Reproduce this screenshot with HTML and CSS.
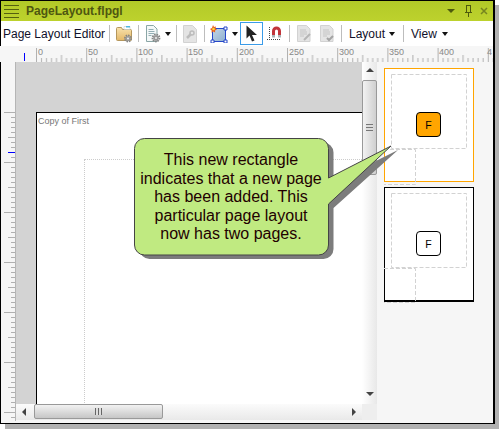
FILE: index.html
```html
<!DOCTYPE html>
<html lang="en">
<head>
  <meta charset="UTF-8">
  <title>PageLayout.flpgl</title>
  <link rel="stylesheet" href="styles.css">
</head>
<body>
  <div class="window">
    <div class="titlebar">
      <div class="hamburger"><span></span><span></span><span></span><span></span></div>
      <div class="title">PageLayout.flpgl</div>
      <svg class="title-tools" width="48" height="16" viewBox="0 0 48 16">
        <path d="M5 6h8l-4 4z" fill="#4d5a0c"/>
        <path d="M23 9.500h7M24.500 3v6M28.500 3v6M24 2.500h5M26.500 9v5" stroke="#4d5a0c" fill="none"/>
        <path d="M39 5l6 6M45 5l-6 6" stroke="#76851f" stroke-width="1.500" fill="none"/>
      </svg>
    </div>

    <div class="toolbar">
      <span class="tb-label first">Page Layout Editor</span>
      <i class="sep"></i>
      <svg class="tb-icon folder" width="18" height="18" viewBox="0 0 18 18">
        <defs>
          <linearGradient id="folder-fill" x1="0" y1="0" x2="0" y2="1"><stop offset="0" stop-color="#f8e2ae"/><stop offset="1" stop-color="#e4b868"/></linearGradient>
        </defs>
        <path d="M1.500 3.500a1 1 0 0 1 1-1h4l1 2h8a1 1 0 0 1 1 1v9a1 1 0 0 1-1 1h-13a1 1 0 0 1-1-1z" fill="url(#folder-fill)" stroke="#b5975c"/>
        <path d="M9 1.500h6v3H9z" fill="#fff" stroke="#b9c4c4" stroke-width=".5"/>
        <path d="M11 1h4v1.500h-4z" fill="#4fb6e0"/>
        <circle cx="13" cy="13.500" r="3" fill="none" stroke="#858585" stroke-width="2" stroke-dasharray="1.500 .8"/>
        <circle cx="13" cy="13.500" r="2.500" fill="#9a9a9a"/><circle cx="13" cy="13.500" r="1" fill="#eee"/>
      </svg>
      <i class="sep s2"></i>
      <svg class="tb-icon doc" width="18" height="18" viewBox="0 0 18 18">
        <path d="M2.500 .5h7l3.500 3.500v12.500h-10.500z" fill="#f4f8f8" stroke="#8aa6a6"/>
        <path d="M4.500 4.500h5M4.500 6.500h6M4.500 8.500h6M4.500 10.500h3" stroke="#93aeb4"/>
        <circle cx="12" cy="13" r="3.400" fill="none" stroke="#858585" stroke-width="2" stroke-dasharray="1.500 .8"/>
        <circle cx="12" cy="13" r="2.800" fill="#9a9a9a"/><circle cx="12" cy="13" r="1" fill="#eee"/>
      </svg>
      <i class="caret c-doc"></i>
      <i class="sep s3"></i>
      <svg class="tb-icon wrench" width="14" height="18" viewBox="0 0 14 18">
        <path d="M.5 .5h9l4 4v13H.5z" fill="#e4e4e4" stroke="#d2d2d2"/>
        <path d="M4 13l4-4" stroke="#bcbcbc" stroke-width="2.500"/>
        <circle cx="9" cy="8" r="2" fill="none" stroke="#bcbcbc" stroke-width="1.500"/>
      </svg>
      <i class="sep s4"></i>
      <svg class="tb-icon shape" width="18" height="18" viewBox="0 0 18 18">
        <defs>
          <linearGradient id="shape-fill" x1="0" y1="0" x2="1" y2="1"><stop offset="0" stop-color="#c3d6e6"/><stop offset="1" stop-color="#8fb0cf"/></linearGradient>
        </defs>
        <rect x="2.500" y="3.500" width="13" height="13" fill="url(#shape-fill)" stroke="#2546c8"/>
        <path d="M14 2h3v3h-3zM1 15h3v3H1zM14 15h3v3h-3z" fill="#fff" stroke="#2546c8"/>
        <path d="M3 0l1 2 2-.5-.5 2 1.500 1-2 1 .2 2-2-1-1.700 1.200.2-2.200L0 4l2-1z" fill="#e8601c"/><circle cx="3.500" cy="4" r="1.300" fill="#fbd23a"/>
      </svg>
      <i class="caret c-shape"></i>
      <div class="tb-toggle">
        <svg width="13" height="17" viewBox="0 0 13 17"><path d="M1.500 .5v13l3-3 2.500 6 2.500-1-2.500-5.500h5z" fill="#222"/></svg>
      </div>
      <svg class="tb-icon magnet" width="15" height="16" viewBox="0 0 15 16">
        <path d="M5 9V5a4.500 4.500 0 0 1 9 0v4h-3V5a1.500 1.500 0 0 0-3 0v4z" fill="#c2343a"/>
        <path d="M5 9h3v2.500H5zM11 9h3v2.500h-3z" fill="#a9b3b6"/>
        <path d="M2.500 1v14M0 13.500h14" stroke="#444" stroke-dasharray="1 1"/>
      </svg>
      <i class="sep s5"></i>
      <svg class="tb-icon off1" width="14" height="17" viewBox="0 0 14 17">
        <path d="M.5 .5h9l3.500 3.500v12.500H.5z" fill="#e4e4e4" stroke="#d2d2d2"/>
        <path d="M3 5h6M3 7h7M3 9h7M3 11h4" stroke="#c4c4c4"/><path d="M7 15l6-6" stroke="#b5b5b5" stroke-width="2"/>
      </svg>
      <svg class="tb-icon off2" width="14" height="17" viewBox="0 0 14 17">
        <path d="M.5 .5h9l3.500 3.500v12.500H.5z" fill="#e4e4e4" stroke="#d2d2d2"/>
        <path d="M3 5h6M3 7h7M3 9h7M3 11h4" stroke="#c4c4c4"/><path d="M7 13l2 2 4-4" stroke="#a4a4a4" stroke-width="2" fill="none"/>
      </svg>
      <i class="sep s6"></i>
      <span class="tb-label layout">Layout</span>
      <i class="caret c-layout"></i>
      <i class="sep s7"></i>
      <span class="tb-label view">View</span>
      <i class="caret c-view"></i>
    </div>

    <svg class="ruler-top" width="493" height="16" viewBox="0 0 493 16">
      <defs>
        <pattern id="ticks-x" x="36" y="0" width="50.200" height="16" patternUnits="userSpaceOnUse">
          <path d="M.5 2v14M5.500 12v4M10.500 12v4M15.500 12v4M20.500 12v4M25.500 9v7M30.500 12v4M35.500 12v4M40.500 12v4M45.500 12v4" stroke="#b0b0b0" fill="none"/>
        </pattern>
      </defs>
      <rect x="36" y="0" width="457" height="16" fill="url(#ticks-x)"/>
      <path d="M24.500 7V15" stroke="#0000ff"/>
      <g class="ruler-nums">
        <text x="38" y="9">0</text><text x="88" y="9">50</text><text x="138" y="9">100</text>
        <text x="188" y="9">150</text><text x="239" y="9">200</text><text x="289" y="9">250</text>
        <text x="339" y="9">300</text><text x="389" y="9">350</text><text x="439" y="9">400</text>
        <text x="487" y="9">4</text>
      </g>
    </svg>

    <div class="workspace">
      <svg class="ruler-left" width="14" height="359" viewBox="0 0 14 359">
        <defs>
          <pattern id="ticks-y" x="0" y="50" width="14" height="50" patternUnits="userSpaceOnUse">
            <path d="M3 .5h11M10 5.500h4M10 10.500h4M10 15.500h4M10 20.500h4M7 25.500h7M10 30.500h4M10 35.500h4M10 40.500h4M10 45.500h4" stroke="#b0b0b0" fill="none"/>
          </pattern>
        </defs>
        <rect x="0" y="50" width="14" height="309" fill="url(#ticks-y)"/>
        <path d="M7 90.500h7" stroke="#0000ff"/>
      </svg>

      <div class="center">
        <div class="center-top">
          <div class="canvas">
            <div class="page">
              <span class="page-name">Copy of First</span>
              <div class="page-margin"></div>
            </div>
          </div>
          <div class="vscroll">
            <i class="arrow up"></i>
            <div class="vthumb"><span class="vgrip"></span></div>
            <i class="arrow down"></i>
          </div>
        </div>
        <div class="center-bottom">
          <div class="hscroll">
            <i class="arrow left"></i>
            <div class="hthumb"><span class="hgrip"></span></div>
            <i class="arrow right"></i>
          </div>
          <div class="corner"></div>
        </div>
      </div>

      <div class="thumbs">
        <div class="thumb active">
          <svg class="thumb-guides" width="92" height="118" viewBox="0 0 92 118">
            <rect x="7.500" y="6.500" width="75" height="74"/>
            <path d="M0 81.500H31.500V116.500H0"/>
          </svg>
          <div class="thumb-f">F</div>
        </div>
        <div class="thumb">
          <svg class="thumb-guides" width="92" height="118" viewBox="0 0 92 118">
            <rect x="7.500" y="6.500" width="75" height="74"/>
            <path d="M0 81.500H31.500V115.500H0"/>
          </svg>
          <div class="thumb-f">F</div>
        </div>
      </div>
    </div>

    <div class="callout">
      <svg width="272" height="130" viewBox="0 0 272 130">
        <path class="callout-shadow" d="M16.500 5.500h174a10 10 0 0 1 10 10V45L265 13 200.500 71V112a10 10 0 0 1-10 10h-174a10 10 0 0 1-10-10V15.500a10 10 0 0 1 10-10z"/>
        <path class="callout-shape" d="M11.500 1.500h174a10 10 0 0 1 10 10V41L258 9 195.500 67V108a10 10 0 0 1-10 10h-174a10 10 0 0 1-10-10V11.500a10 10 0 0 1 10-10z"/>
      </svg>
      <p>This new rectangle indicates that a new page has been added. This particular page layout now has two pages.</p>
    </div>
  </div>
</body>
</html>
```

FILE: styles.css
```css
body { margin: 0; min-height: 429px; background: #fff; font-family: "Liberation Sans", Arial, sans-serif; }

.window { position: relative; width: 492px; height: 422px; background: #f6f6f6; border: 1px solid #000; border-right-width: 2px; box-shadow: 5px 5px 0 #b1b1b1; overflow: visible; }

.titlebar { display: flex; align-items: center; height: 20px; background: linear-gradient(#b2c928, #bdd22d); }
.hamburger { display: flex; flex-direction: column; gap: 3px; width: 15px; margin-left: 3px; }
.hamburger span { height: 1px; background: #55600f; }
.title { margin-left: 7px; font-size: 12px; font-weight: bold; color: #4e5610; flex: 1; }
.title-tools { margin-right: 3px; }

.toolbar { position: relative; display: flex; align-items: center; height: 25px; background: #fff; font-size: 12px; color: #10102a; }
.toolbar .tb-label { white-space: nowrap; }
.tb-label.first { margin-left: 2px; width: 106px; }
.sep { display: block; width: 1px; height: 17px; background: #bdbdbd; flex: none; }
.caret { display: block; width: 0; height: 0; margin-top: 1px; border: 3.500px solid transparent; border-top: 4px solid #111; border-bottom: 0; flex: none; }
.tb-icon { display: block; flex: none; }
.folder { margin-left: 5px; }
.s2 { margin-left: 5px; }
.doc { margin-left: 5px; }
.c-doc { margin-left: 3px; }
.s3 { margin-left: 5px; }
.wrench { margin-left: 6px; }
.s4 { margin-left: 7px; }
.shape { margin-left: 5px; }
.c-shape { margin-left: 4px; }
.tb-toggle { display: flex; align-items: center; justify-content: center; flex: none; width: 21px; height: 21px; margin-left: 2px; background: #fff; border: 1px solid #3a9be8; }
.magnet { margin-left: 4px; }
.s5 { margin-left: 7px; }
.off1 { margin-left: 7px; }
.off2 { margin-left: 9px; }
.s6 { margin-left: 7px; }
.layout { margin-left: 7px; }
.c-layout { margin-left: 4px; }
.s7 { margin-left: 8px; }
.view { margin-left: 7px; }
.c-view { margin-left: 5px; }

.ruler-top { display: block; background: #f6f6f6; margin-left: -1px; }
.ruler-nums text { font-size: 9px; fill: #888; }

.workspace { display: flex; height: 361px; }
.ruler-left { display: block; flex: none; background: #f6f6f6; border-right: 1px solid #b5b5b5; }

.center { display: flex; flex-direction: column; width: 361px; flex: none; }
.center-top { display: flex; height: 342px; }
.canvas { width: 346px; flex: none; padding: 50px 0 0 20px; box-sizing: border-box; background: #d3d3d3; overflow: hidden; }
.page { position: relative; width: 400px; height: 292px; background: #fff; border: 1px solid #000; border-bottom: 0; }
.page-name { display: block; margin: 3px 0 0 1px; font-size: 9px; color: #777; }
.page-margin { position: absolute; left: 47px; top: 46px; width: 400px; height: 300px; border: 1px dotted #ccc; }

.vscroll { position: relative; flex: none; width: 15px; background: linear-gradient(90deg, #fff, #e8e8e8); }
.vthumb { position: absolute; left: 0; top: 18px; width: 13px; height: 93px; display: flex; align-items: center; justify-content: center; background: linear-gradient(90deg, #f2f2f2, #cfcfcf); border: 1px solid #999; border-radius: 2px; }
.vgrip { display: block; width: 7px; height: 7px; background: repeating-linear-gradient(#777 0 1px, #ddd 1px 3px); }

.center-bottom { display: flex; height: 19px; }
.hscroll { position: relative; width: 346px; height: 16px; background: linear-gradient(#fbfbfb, #e9e9e9); }
.hthumb { position: absolute; left: 18px; top: 0; width: 127px; height: 13px; display: flex; align-items: center; justify-content: center; background: linear-gradient(#f2f2f2, #c6c6c6); border: 1px solid #999; border-radius: 2px; }
.hgrip { display: block; width: 7px; height: 7px; background: repeating-linear-gradient(90deg, #666 0 1px, #ddd 1px 3px); }
.corner { width: 15px; height: 16px; background: #eee; }

.arrow { position: absolute; width: 0; height: 0; border: 4px solid transparent; }
.arrow.up { left: 4px; top: 6px; border-top: 0; border-bottom: 4px solid #444; }
.arrow.down { left: 4px; bottom: 8px; border-bottom: 0; border-top: 4px solid #444; }
.arrow.left { left: 6px; top: 4px; border-left: 0; border-right: 4px solid #444; }
.arrow.right { right: 6px; top: 4px; border-right: 0; border-left: 4px solid #444; }

.thumbs { flex: 1; display: flex; flex-direction: column; gap: 5px; padding: 6px 0 0 7px; background: #f6f6f6; }
.thumb { position: relative; width: 88px; height: 112px; background: #fff; border: 1px solid #000; border-bottom-width: 2px; }
.thumb.active { border: 1px solid #ffa500; }
.thumb-guides { position: absolute; left: -1px; top: -1px; overflow: visible; }
.thumb-guides rect, .thumb-guides path { fill: none; stroke: #d2d2d2; stroke-dasharray: 4 2; }
.thumb-f { position: absolute; left: 31px; top: 43px; width: 23px; height: 23px; display: flex; align-items: center; justify-content: center; font-size: 10.500px; color: #000; background: #fff; border: 1px solid #000; border-radius: 4px; }
.thumb.active .thumb-f { background: #ffa500; }

.callout { position: absolute; left: 132px; top: 136px; width: 272px; height: 130px; }
.callout svg { display: block; }
.callout-shadow { fill: #7c7c7c; }
.callout-shape { fill: #c0ea81; stroke: #444; stroke-width: 1; }
.callout p { position: absolute; left: 7px; top: 14px; width: 182px; margin: 0; font-size: 16px; line-height: 18.600px; text-align: center; color: #200; }
```
